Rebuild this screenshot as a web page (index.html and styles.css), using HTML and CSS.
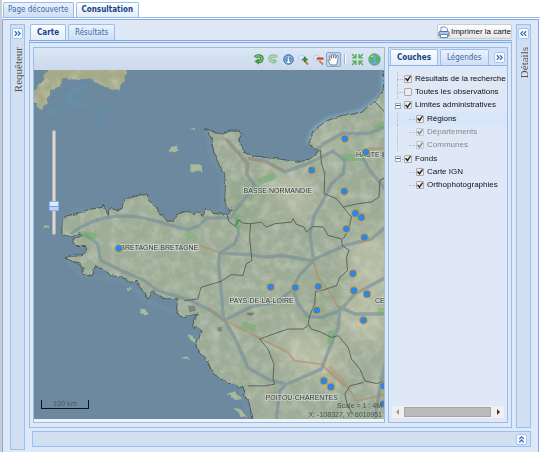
FILE: index.html
```html
<!DOCTYPE html>
<html lang="fr">
<head>
<meta charset="utf-8">
<title>Consultation</title>
<link rel="stylesheet" href="styles.css">
</head>
<body>
<nav class="tabs main-tabs">
  <button class="tab">Page découverte</button>
  <button class="tab active">Consultation</button>
</nav>
<main class="app">
  <aside class="side side-left">
    <button class="chev" aria-label="Ouvrir le requêteur"><svg viewBox="0 0 10 10"><path d="M2 2.500 4.500 5 2 7.500M5.500 2.500 8 5 5.500 7.500"/></svg></button>
    <span class="side-title">Requêteur</span>
  </aside>
  <section class="center">
    <header class="center-head">
      <div class="tabs">
        <button class="tab active">Carte</button>
        <button class="tab">Résultats</button>
      </div>
      <button class="print">
        <svg viewBox="0 0 12 12"><path d="M3 6V1h4.500L9.500 3v3" fill="#f4faff" stroke="#6d95cc"/><path d="M1 6.500q0-1 1-1h8q1 0 1 1V10H1z" fill="#a9c4e6" stroke="#5577ab"/><path d="M2.500 8.500h7v3h-7z" fill="#fff" stroke="#6487ba"/></svg>
        Imprimer la carte</button>
    </header>
    <div class="center-body">
      <section class="map-panel">
        <div class="toolbar">
          <button aria-label="Précédent"><svg viewBox="0 0 12 12"><path d="M2.500 3.800C4 1.300 10 1.500 9.800 5.300 9.600 8 8 8.300 6 8.200" fill="none" stroke="#35813a" stroke-width="3.600"/><path d="M2.500 3.800C4 1.300 10 1.500 9.800 5.300 9.600 8 8 8.300 6 8.200" fill="none" stroke="#74c06c" stroke-width="1.800"/><path d="M1.500 8 6.500 4.500v7.200z" fill="#429645"/></svg></button>
          <button aria-label="Suivant"><svg viewBox="0 0 12 12"><path d="M9.500 3.800C8 1.300 2 1.500 2.200 5.300 2.400 8 4 8.300 6 8.200" fill="none" stroke="#8abb94" stroke-width="3.600"/><path d="M9.500 3.800C8 1.300 2 1.500 2.200 5.300 2.400 8 4 8.300 6 8.200" fill="none" stroke="#b2d6b4" stroke-width="1.600"/><path d="M10.500 8 5.500 4.500v7.200z" fill="#93c49a"/></svg></button>
          <button aria-label="Information"><svg viewBox="0 0 12 12"><circle cx="6" cy="6" r="5.200" fill="#5d8fca" stroke="#315f9c"/><circle cx="6" cy="6" r="4" fill="none" stroke="#9fc2ea" stroke-width=".8"/><path d="M6 2.800v1.400M5 5.500h1V9M4.500 9h3" fill="none" stroke="#fff" stroke-width="1.400"/></svg></button>
          <button aria-label="Zoom avant"><svg viewBox="0 0 12 12"><rect x=".5" y="1.500" width="7" height="5" rx="2.500" fill="#d9ebfa" stroke="#a9c3e2" stroke-width=".8"/><path d="m7.500 7.500 3.500 4" stroke="#b47a3c" stroke-width="2"/><path d="M4.500 6h6M7.500 3v6" stroke="#2f8a34" stroke-width="2.200"/></svg></button>
          <button aria-label="Zoom arrière"><svg viewBox="0 0 12 12"><rect x=".5" y="1.500" width="7" height="6" rx="2.800" fill="#d9ebfa" stroke="#a9c3e2" stroke-width=".8"/><path d="m7 7.500 4 4" stroke="#c0803f" stroke-width="2"/><path d="M4 5h7.500" stroke="#e0342f" stroke-width="2.400"/></svg></button>
          <button class="pressed" aria-label="Déplacer"><svg viewBox="0 0 12 12"><path d="M3.500 11 1 7.200Q.8 5.800 2.200 6.300L3 7 2 3q.7-1.300 1.500 0L4.300 5 4.200 1.500q.8-1.100 1.500 0L6 4.700 6.700 1.500q.9-.9 1.500.2L8 5l1.200-2.500q1-.5 1.200.5L9.800 7.500 8.800 11z" fill="#fff" stroke="#666" stroke-width=".7"/></svg></button>
          <span class="sep"></span>
          <button class="wide" aria-label="Étendue maximale"><svg viewBox="0 0 12 12"><path d="M1 1l3 3M4.500 1v3.500H1M11 1 8 4M7.500 1v3.500H11M1 11l3-3M1 7.500h3.500V11M11 11 8 8M11 7.500H7.500V11" fill="none" stroke="#58ab55" stroke-width="1.300"/></svg></button>
          <button class="wide" aria-label="Monde"><svg viewBox="0 0 12 12"><circle cx="6" cy="6" r="5.300" fill="#67a8e0" stroke="#5a9a78" stroke-width=".8"/><path d="M1 5Q2 1.500 5.500 1L7 2 5.500 4 4 5l1.500 1.500L4.500 9 3.500 8.500zM8 2.500l2.300 1L11 6 9.500 9 8 9.500 7 7l.5-2z" fill="#55b84c"/><path d="M3 3.500 5 2.500" stroke="#d8f5c8"/></svg></button>
        </div>
        <div class="map">
          <svg class="map-art" viewBox="34 70 351 348" preserveAspectRatio="xMinYMin slice" role="img" aria-label="Carte des observations">
            <defs>
              <filter id="grain" x="0" y="0" width="100%" height="100%">
                <feTurbulence type="fractalNoise" baseFrequency=".1 .16" numOctaves="5" seed="4"/>
                <feColorMatrix values="0 0 0 0 .4  0 0 0 0 .47  0 0 0 0 .35  1.500 0 0 0 -.600"/>
              </filter>
              <filter id="pale" x="0" y="0" width="100%" height="100%">
                <feTurbulence type="fractalNoise" baseFrequency=".1" numOctaves="5" seed="12"/>
                <feColorMatrix values="0 0 0 0 .8  0 0 0 0 .82  0 0 0 0 .73  0 1.500 0 0 -.600"/>
              </filter>
              <filter id="rough" x="-5%" y="-5%" width="110%" height="110%">
                <feTurbulence type="fractalNoise" baseFrequency=".22" numOctaves="2" seed="3"/>
                <feDisplacementMap in="SourceGraphic" scale="4" xChannelSelector="R" yChannelSelector="G"/>
              </filter>
              <filter id="soft" x="-10%" y="-10%" width="120%" height="120%"><feGaussianBlur stdDeviation="2"/></filter>
              <filter id="haze" x="-30%" y="-30%" width="160%" height="160%"><feGaussianBlur stdDeviation="9"/></filter>
              <path id="france" d="M62 220 65 216 77 213 90 209 102 207 103 204 105 209 108 215 110 208 116 210 122 208 123 203 125 198 132 197 138 195 147 194 148 200 154 205 158 212 163 216 167 221 173 220 178 213 188 211 193 213 200 212 203 216 205 208 210 209 212 213 227 214 232 210 227 207 224 202 225 187 224 173 220 167 217 160 213 150 211 140 209 133 205 129 212 131 222 134 230 131 237 131 241 134 238 140 245 153 255 157 273 158 287 160 297 162 307 160 315 155 319 150 312 148 308 143 313 130 327 120 343 116 360 112 373 102 382 92 383 80 382 70H392V425H252L250 408 248 400 243 393 243 387 227 382 213 373 207 360 200 353 195 343 202 330 192 325 197 313 183 317 176 312 177 303 177 298 167 298 158 295 153 290 147 300 145 292 138 285 137 280 128 282 125 277 110 275 108 272 95 265 92 275 83 275 83 267 77 262 65 258 72 255 83 254 87 250 85 245 73 245 73 240 82 235 80 233 72 236 62 234z"/>
              <path id="england" d="M50 68 44 76 44 80 38 87 30 92V102L37 103 38 106 41 110 44 106 47 103 47 98 50 95 50 90 56 88 60 86 63 78 72 80 84 80 91 79 94 82 100 84 106 88 112 90 119 90 121 84 125 81 124 76 127 73 124 68z"/>
              <clipPath id="land"><use href="#france"/><use href="#england"/></clipPath>
            </defs>
            <path d="M30 66H390V422H30z" fill="#6c899f"/>
            <g fill="none" filter="url(#soft)" stroke="#5c9dba"><path d="M85 86q-18 6-16 13 5 7 16 6" stroke-width="4" opacity=".5"/><path d="M92 105q15 4 10 13-9 5 0 7" stroke-width="4" opacity=".35"/><path d="M46 114l14-5" stroke-width="5" opacity=".3"/><path d="M383 70v22l-10 11-13 9-33 8-14 10-5 13" stroke="#9cc9df" stroke-width="4" opacity=".7"/><path d="M205 126l7 34 10 13v38l-17-3M62 219l15-8 30-3M194 330l14 33 33 24 8 31M65 258l18 17 44 5 18 20 31 12" stroke="#97bccb" stroke-width="2" opacity=".3"/></g>
            <g filter="url(#rough)">
              <use href="#england" fill="#a5a986"/>
              <use href="#france" fill="#9dac97" stroke="#3b4540" stroke-width=".8"/>
              <path d="M171 147l6-2 1 4-4 4-6-1zM190 165l11 0 1 6-12 0zM191 129h4v1h-4zM139 308l5 0 5 6-8-1zM187 334l5 1 4 5-4 1zM183 356h5v2h-5zM44 225h5v2h-5zM126 287h5v2h-5zM226 392l8-1 7 7-6 1zM233 407l7 1 6 8-5 1z" fill="#a9b99d"/>
            </g>
            <g clip-path="url(#land)">
              <g filter="url(#haze)"><path d="M280 170l25 10 5 30-15 5-25-35zM345 250l30-20 15 15v40l-25 20zM315 140h25v15h-25zM280 330l50 10 10 40-50-10zM340 290l45 10v40h-40z" fill="#d5cfb4" opacity=".5"/><path d="M225 180h40v40h-40zM310 285h35v35h-35z" fill="#8ca282" opacity=".5"/></g>
              <path d="M34 70H385V418H34z" filter="url(#grain)" opacity=".5"/>
              <path d="M34 70H385V418H34z" filter="url(#pale)" opacity=".45"/>
              <g transform="translate(34 70) scale(.3333)" fill="none" stroke-linejoin="round">
                <g stroke="#748e9a" stroke-width="10" opacity=".6">
                  <path d="M110 490Q170 445 240 438T400 462L460 478 495 465 515 443 590 442 605 418 660 345 635 310 640 280 575 205M605 440 612 490 600 520 555 548 552 580 560 660 567 745M640 265 690 270 750 305 820 280 900 240M860 225 920 190 1000 190 1050 170M890 240 930 270 925 310 890 340 860 400 840 430 825 490 835 560M970 240 1005 300 1053 360M560 548 640 552 690 560 740 555 830 570 930 525 1010 505 1053 470M835 570 790 620 775 655 790 700 820 738 860 740 915 720 960 670 1053 620M770 660 725 695 650 708 570 748M150 490 190 520 200 570 260 600 330 630 370 660 470 690 530 720 570 750 600 800 640 890 700 925 755 940 860 895 885 830 910 770 915 710 960 730 1053 730M755 940 735 960 725 1044M1053 870 1035 950 1020 1044M860 228 840 240"/>
                </g>
                <g stroke="#b08a66" stroke-width="6" opacity=".55"><path d="M565 200 605 245 635 280 640 320M640 262 700 280 750 300M495 525 560 548M520 715 570 748 690 810 760 845 780 870 860 880 900 920 940 950 965 990 1053 970M835 570 850 620 885 665 910 710M1000 235h53M725 965h-30"/></g>
                <path d="M880 890l55 55" stroke="#b58a68" stroke-width="18" opacity=".35"/>
                <g stroke="#6cad69" stroke-width="20" opacity=".5"><path d="M140 490 185 500M455 485 485 510M673 335 722 315M918 262 990 262M1020 175 1053 160M608 430 610 475M620 762 662 775M888 780 888 820M1030 722h23"/></g>
                <path d="M460 705l20 0 5 15-20 5zM548 770l14-2 0 14-12 0z" fill="#66706b" opacity=".6"/>
                <g stroke="#454c49" stroke-width="2.500" opacity=".9"><path d="M578 432 582 452 602 468 612 448 625 458 648 460 680 455 695 470 720 460 770 455 775 445 785 462 808 470 815 485 835 468 865 470 880 495 920 505 922 525 943 540 935 560 938 600 915 620 905 645 860 660 842 662 840 700 825 735 820 760 830 775 860 785 890 800 910 795 940 830 950 865 975 895 990 930 1025 938 1053 930M648 460 645 500 652 570 635 580 625 615 590 612 560 632 500 650 490 685 450 690M857 240 860 280 870 310 868 370 905 385 925 410 970 400 1010 395 1032 380 1035 330 1053 320M925 410 950 440 940 480 925 505M820 765 805 775 760 775 730 785 675 805 700 835 718 880 715 925 720 940 690 945 640 945M985 935 945 945 930 970 938 1005 955 1030M1015 90 1053 130"/></g>
              </g>
            </g>
            <g class="places">
              <text x="243" y="193">BASSE NORMANDIE</text>
              <text x="355" y="157">HAUTE-</text>
              <text x="120" y="249">BRETAGNE BRETAGNE</text>
              <text x="229" y="302">PAYS-DE-LA-LOIRE</text>
              <text x="374" y="302">CE</text>
              <text x="265" y="399">POITOU-CHARENTES</text>
            </g>
            <path d="M382 157v-5" stroke="#333a3c" stroke-width=".8"/>
            <g class="spots">
              <circle cx="344" cy="138.500" r="3.800"/><circle cx="365" cy="152" r="3.800"/><circle cx="311" cy="170" r="3.800"/><circle cx="343.500" cy="191" r="3.800"/><circle cx="354.500" cy="213" r="3.800"/><circle cx="360.500" cy="217" r="3.800"/><circle cx="345.500" cy="228.500" r="3.800"/><circle cx="363.500" cy="237" r="3.800"/><circle cx="118.500" cy="248" r="3.800"/><circle cx="270" cy="286.500" r="3.800"/><circle cx="294.500" cy="287" r="3.800"/><circle cx="317.500" cy="286" r="3.800"/><circle cx="352" cy="273" r="3.800"/><circle cx="353" cy="290" r="3.800"/><circle cx="366" cy="293.500" r="3.800"/><circle cx="316" cy="309.500" r="3.800"/><circle cx="362.500" cy="319.500" r="3.800"/><path d="M246 311.500a3.800 3.800 0 0 0 7.600 0z"/><circle cx="323" cy="380" r="3.800"/><circle cx="330" cy="386" r="3.800"/><circle cx="382.500" cy="385" r="3.800"/><circle cx="382.500" cy="403" r="3.800"/>
            </g>
          </svg>
          <input class="zoom" type="range" min="0" max="20" value="5" aria-label="Niveau de zoom">
          <div class="scale">100 km</div>
          <div class="coords"><span>Scale = 1 : 4M</span><span>X: -108327, Y: 6010951</span></div>
        </div>
      </section>
      <aside class="layers">
        <header class="layers-head">
          <div class="tabs">
            <button class="tab active">Couches</button>
            <button class="tab">Légendes</button>
          </div>
          <button class="chev" aria-label="Replier"><svg viewBox="0 0 10 10"><path d="M2 2.500 4.500 5 2 7.500M5.500 2.500 8 5 5.500 7.500"/></svg></button>
        </header>
        <ul class="tree">
          <li><label><input type="checkbox" checked>Résultats de la recherche</label></li>
          <li><label><input type="checkbox">Toutes les observations</label></li>
          <li class="open"><label><input type="checkbox" checked>Limites administratives</label></li>
          <li class="child selected"><label><input type="checkbox" checked>Régions</label></li>
          <li class="child off"><label><input type="checkbox" checked disabled>Départements</label></li>
          <li class="child off"><label><input type="checkbox" checked disabled>Communes</label></li>
          <li class="open"><label><input type="checkbox" checked>Fonds</label></li>
          <li class="child last"><label><input type="checkbox" checked>Carte IGN</label></li>
          <li class="child last"><label><input type="checkbox" checked>Orthophotographies</label></li>
        </ul>
        <div class="hscroll">
          <button aria-label="Défiler à gauche"><svg viewBox="0 0 12 12"><path d="M7 3v6L4 6z" fill="#999"/></svg></button>
          <div class="thumb"></div>
          <button aria-label="Défiler à droite"><svg viewBox="0 0 12 12"><path d="M5 3v6l3-3z" fill="#333"/></svg></button>
        </div>
      </aside>
    </div>
  </section>
  <aside class="side">
    <button class="chev" aria-label="Ouvrir les détails"><svg viewBox="0 0 10 10"><path d="M4.500 2.500 2 5l2.500 2.500M8 2.500 5.500 5 8 7.500"/></svg></button>
    <span class="side-title">Détails</span>
  </aside>
  <footer class="bottom">
    <button class="chev" aria-label="Déplier"><svg viewBox="0 0 10 10"><path d="M2.500 4.500 5 2l2.500 2.500M2.500 8 5 5.500 7.500 8"/></svg></button>
  </footer>
</main>
</body>
</html>
```
FILE: styles.css
```css
*, *::before, *::after { box-sizing: border-box; }
body {
  margin: 0;
  height: 100vh;
  display: flex;
  flex-direction: column;
  border-left: 2px solid #cdcdcd;
  background: #fff;
  font: 8px/12px "Liberation Sans", sans-serif;
  color: #111;
}
button { font: inherit; color: inherit; margin: 0; padding: 0; border: 0; background: none; }
svg { display: block; }

.tabs { display: flex; gap: 2px; }
.tab {
  height: 16px;
  padding: 0 6px;
  border: 1px solid #99bdee;
  border-bottom: 0;
  border-radius: 2px 2px 0 0;
  background: linear-gradient(#e9f2fe, #cfdef4);
  color: #416aa3;
  font-family: "DejaVu Sans Condensed", "DejaVu Sans", sans-serif;
  white-space: nowrap;
}
.tab.active {
  background: linear-gradient(#fff, #e2ecfa);
  color: #15428b;
  font-weight: bold;
}
.main-tabs { padding: 2px 0 0 1px; border-bottom: 1px solid #99bbe8; }
.main-tabs .tab { height: 15px; padding: 0 4px; }
.main-tabs .active { padding: 0 5px; }

.app {
  flex: 1;
  min-height: 0;
  display: grid;
  grid-template-columns: 15px minmax(0, 1fr) 15px;
  grid-template-rows: minmax(0, 1fr) auto;
  gap: 3px 4px;
  margin-top: 1px;
  margin-right: 1px;
  padding: 4px 7px 2px;
  border: 1px solid #7fabe8;
  border-bottom: 0;
  background: #dfe8f6;
}
.side {
  display: flex;
  flex-direction: column;
  align-items: center;
  gap: 8px;
  padding-top: 3px;
  border: 1px solid #99c0f5;
  background: #d2dff0;
}
.side-left { grid-row: 1 / 3; }
.side-title {
  writing-mode: vertical-rl;
  transform: rotate(180deg);
  font: 11px/12px "Liberation Serif", serif;
  color: #555;
}
.chev {
  flex: none;
  width: 11px;
  height: 11px;
  border: 1px solid #a5c6f2;
  border-radius: 2px;
  background: #f5faff;
}
.chev svg { width: 9px; height: 9px; fill: none; stroke: #3a72b8; stroke-width: 1.4; }
.bottom {
  grid-column: 2 / 4;
  display: flex;
  align-items: center;
  justify-content: flex-end;
  height: 16px;
  margin: 0 0 3px 3px;
  padding-right: 3px;
  border: 1px solid #99c0f5;
  background: #d2dff0;
}

.center { display: flex; flex-direction: column; min-height: 0; }
.center-head { display: flex; justify-content: space-between; padding: 0 0 0 1px; }
.print {
  display: flex;
  align-items: center;
  gap: 1px;
  height: 15px;
  border: 1px solid #ccc;
  border-radius: 2px;
  background: linear-gradient(#fff, #e6e6e6);
  white-space: nowrap;
}
.print svg { width: 12px; height: 12px; }
.center-body {
  flex: 1;
  min-height: 0;
  display: grid;
  grid-template-columns: minmax(0, 1fr) 120px;
  gap: 3px;
  padding: 4px 3px;
  border: 1px solid #99bbe8;
  border-top: 3px double #7fabe8;
  background: #dfe8f6;
}
.map-panel {
  display: flex;
  flex-direction: column;
  min-height: 0;
  padding-bottom: 3px;
  border: 1px solid #99bbe8;
  background: #eef3fb;
}
.toolbar {
  flex: none;
  display: flex;
  align-items: center;
  justify-content: flex-end;
  height: 22px;
  padding-right: 1px;
  background: linear-gradient(#dce7f5, #cbd9ec);
}
.toolbar button { display: grid; place-items: center; width: 15px; height: 15px; border-radius: 2px; }
.toolbar svg { width: 11px; height: 11px; }
.toolbar .wide { width: 17px; }
.toolbar .wide svg { width: 13px; height: 13px; }
.toolbar .pressed { background: #bcd5f3; border: 1px solid #7ea6da; }
.toolbar .pressed svg { width: 13px; height: 13px; }
.sep { width: 2px; height: 10px; margin: 0 3px; border-left: 1px solid #98b8e0; border-right: 1px solid #fff; }

.map { position: relative; flex: 1; min-height: 0; overflow: hidden; background: #6c899f; }
.map-art { width: 100%; height: 100%; }
.places { font-size: 7px; fill: #333a3c; stroke: #d9dfd6; stroke-width: 2px; stroke-opacity: .65; paint-order: stroke; }
.spots { fill: #2a87e8; stroke: #d8982c; stroke-width: 1px; }
.zoom {
  position: absolute;
  left: 14px;
  top: 60px;
  width: 11px;
  height: 105px;
  margin: 0;
  appearance: none;
  writing-mode: vertical-lr;
  direction: rtl;
  background: none;
}
.zoom::-webkit-slider-runnable-track {
  width: 4px;
  border: 1px solid #b3b0ae;
  border-radius: 2px;
  background: #dcd8d5;
}
.zoom::-webkit-slider-thumb {
  appearance: none;
  width: 10px;
  height: 10px;
  margin-left: -4px;
  border: 1px solid #8ab4ea;
  border-radius: 1px;
  background: linear-gradient(#d9ebff 4px, #6f9fde 4px, #6f9fde 5px, #b8d6ff 5px);
}
.scale {
  position: absolute;
  left: 7px;
  bottom: 10px;
  width: 48px;
  height: 9px;
  border: 1px solid #111;
  border-top: 0;
  color: #555;
  font: 7px/8px "DejaVu Sans Condensed", sans-serif;
  text-align: center;
}
.coords {
  position: absolute;
  right: 2px;
  bottom: 0;
  display: flex;
  flex-direction: column;
  align-items: flex-end;
  color: #4b544c;
  font: 7px/9px "Liberation Sans", sans-serif;
}

.layers {
  display: flex;
  flex-direction: column;
  min-height: 0;
  padding-bottom: 4px;
  border: 1px solid #99bbe8;
  background: #dfe8f6;
}
.layers-head {
  display: flex;
  align-items: center;
  justify-content: space-between;
  padding: 1px 2px 0 1px;
  border-bottom: 1px solid #8db2e3;
  background: #d3e1f4;
}
.tree {
  display: grid;
  grid-template-rows: repeat(9, 1fr);
  height: 120px;
  margin: 6px 0 0;
  padding: 0;
  list-style: none;
}
.tree li { position: relative; display: flex; align-items: center; padding-left: 15px; white-space: nowrap; }
.tree li.child { padding-left: 27px; }
.tree li::before {
  content: "";
  position: absolute;
  left: 8px;
  top: 50%;
  width: 6px;
  border-top: 1px dotted #b4bcc8;
}
.tree li.child::before { left: 20px; }
.tree li::after {
  content: "";
  position: absolute;
  left: 8px;
  top: 0;
  bottom: 0;
  border-left: 1px dotted #b4bcc8;
}
.tree li.last::after { display: none; }
.tree li.open::after {
  left: 6px;
  top: 4px;
  bottom: auto;
  width: 6px;
  height: 6px;
  border: 1px solid #9db0cb;
  background: linear-gradient(#fff 1px, #456 1px, #456 2px, #fff 2px);
}
.tree .selected { background: #d7e6f9; }
.tree .off { color: #888; }
.tree label { display: flex; align-items: center; gap: 3px; }
.tree input {
  appearance: none;
  display: grid;
  place-items: center;
  width: 8px;
  height: 8px;
  margin: 0;
  border: 1px solid #aaa;
  border-radius: 1px;
  background: #ececec;
}
.tree input:checked::before {
  content: "";
  width: 6px;
  height: 6px;
  background: #222;
  clip-path: polygon(0 50%, 20% 35%, 40% 60%, 85% 0, 100% 15%, 42% 100%);
}
.tree input:disabled { opacity: .5; }
.hscroll { display: flex; height: 12px; margin: auto 3px 0; background: #f0f0f0; }
.hscroll button { width: 12px; height: 12px; }
.hscroll svg { width: 12px; height: 12px; }
.thumb { flex: 1; margin: 1px 1px 1px 0; border: 1px solid #a6a6a6; background: #bababa; }
```
